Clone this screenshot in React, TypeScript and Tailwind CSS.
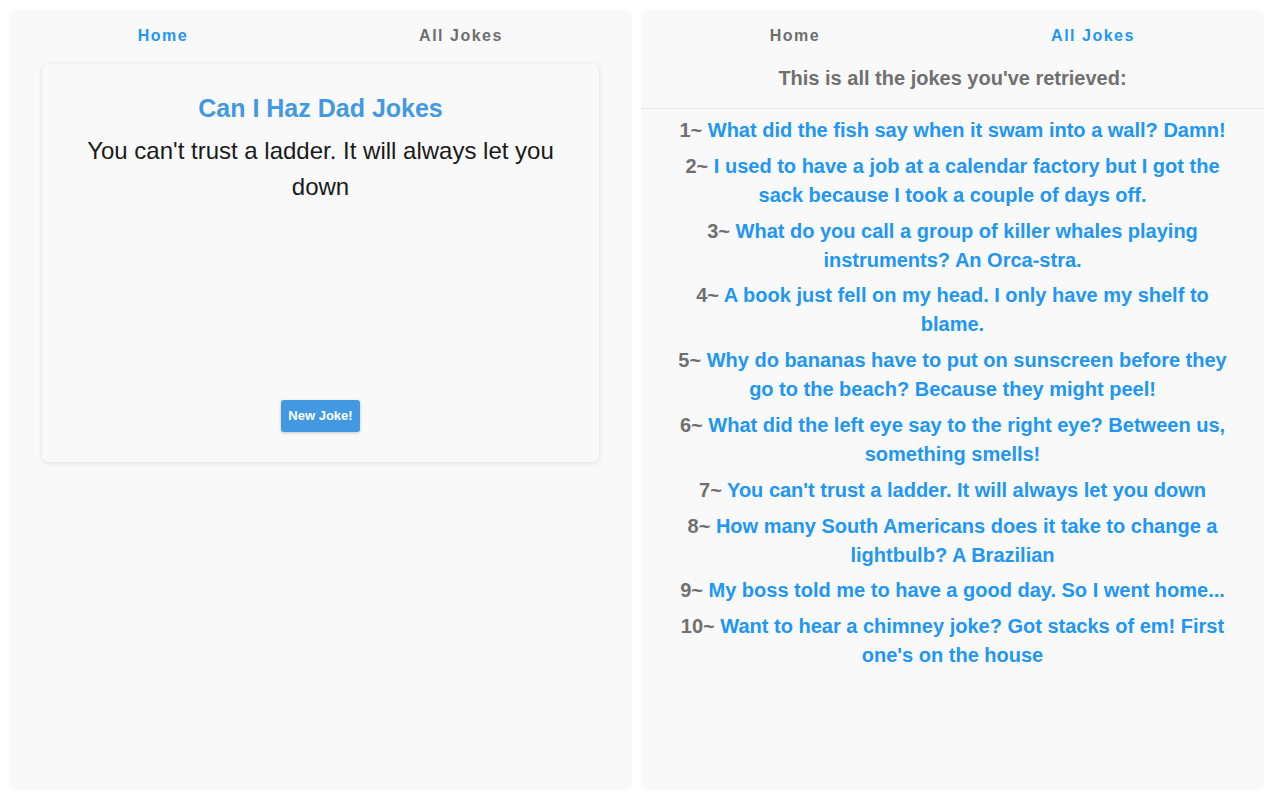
import React from "react";

const jokes: string[] = [
  "What did the fish say when it swam into a wall? Damn!",
  "I used to have a job at a calendar factory but I got the sack because I took a couple of days off.",
  "What do you call a group of killer whales playing instruments? An Orca-stra.",
  "A book just fell on my head. I only have my shelf to blame.",
  "Why do bananas have to put on sunscreen before they go to the beach? Because they might peel!",
  "What did the left eye say to the right eye? Between us, something smells!",
  "You can't trust a ladder. It will always let you down",
  "How many South Americans does it take to change a lightbulb? A Brazilian",
  "My boss told me to have a good day. So I went home...",
  "Want to hear a chimney joke? Got stacks of em! First one's on the house",
];

const font = "font-['Liberation_Sans',Arial,sans-serif]";

// Top navigation, shared by both panels
const Nav = ({ active }: { active: "home" | "all" }) => (
  <nav className="grid grid-cols-[298px_298px] pl-[5px] pt-[17px]">
    <a
      className={`text-center text-[16px] leading-[20px] font-bold tracking-[1.5px] ${
        active === "home" ? "text-[#2196f3]" : "text-[#6e6e6e]"
      }`}
    >
      Home
    </a>
    <a
      className={`text-center text-[16px] leading-[20px] font-bold tracking-[1.5px] ${
        active === "all" ? "text-[#2196f3]" : "text-[#6e6e6e]"
      }`}
    >
      All Jokes
    </a>
  </nav>
);

const HomePanel = () => (
  <section className="flex-1 bg-[#f9f9f9] rounded-lg flex flex-col">
    <Nav active="home" />
    {/* Joke card */}
    <div className="mx-[33px] mt-[18px] h-[398px] bg-[#f9f9f9] rounded-md shadow-[0_1px_4px_rgba(0,0,0,0.12)] flex flex-col items-center px-[30px] pt-[28px] pb-[30px]">
      <h1 className="text-[25px] leading-[32px] font-bold text-[#4299e1]">
        Can I Haz Dad Jokes
      </h1>
      <p className="mt-[9px] text-[24px] leading-[36px] text-[#1a1a1a] text-center">
        You can't trust a ladder. It will always let you down
      </p>
      <button className="mt-auto h-[32px] px-[7px] bg-[#4299e1] text-white text-[13px] font-bold rounded-[3px] shadow-[0_1px_3px_rgba(0,0,0,0.2)]">
        New Joke!
      </button>
    </div>
  </section>
);

const AllJokesPanel = () => (
  <section className="flex-1 bg-[#f9f9f9] rounded-lg flex flex-col">
    <Nav active="all" />
    <h2 className="mt-[18px] pb-[16px] text-center text-[20px] leading-[28px] font-bold text-[#707070] border-b border-[#dce7f3]">
      This is all the jokes you've retrieved:
    </h2>
    <ol className="flex flex-col gap-[6.8px] pt-[7px] px-[31px]">
      {jokes.map((joke, i) => (
        <li key={i} className="text-center text-[20px] leading-[29px] font-bold">
          <span className="text-[#707070]">{i + 1}~ </span>
          <span className="text-[#2196f3]">{joke}</span>
        </li>
      ))}
    </ol>
  </section>
);

export default function App() {
  return (
    <div className={`h-screen w-full bg-white p-[9px] flex gap-[9px] ${font}`}>
      <HomePanel />
      <AllJokesPanel />
    </div>
  );
}
